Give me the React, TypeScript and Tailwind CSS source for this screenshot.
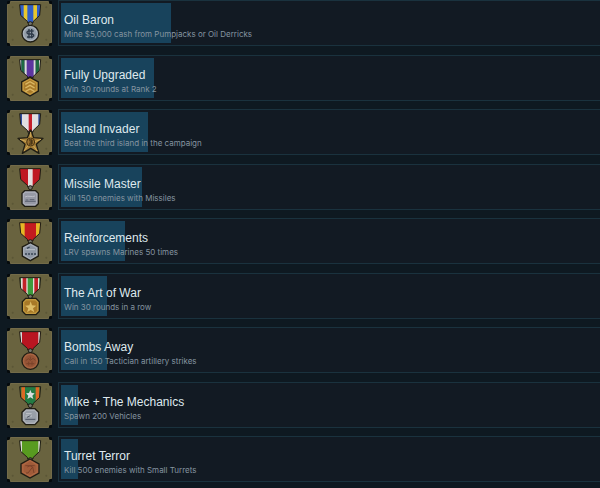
import { useId } from 'react'
import type { ReactNode } from 'react'

type Stripe = [x: number, width: number, color: string]

interface Achievement {
  title: string
  description: string
  percent: number
  base: string
  stripes: Stripe[]
  medal: ReactNode
}

const ink = '#1f1d14'

const roundSilver = (
  <g>
    <circle cx="70" cy="98" r="25" fill="#a3abb5" stroke={ink} strokeWidth="4" />
    <circle cx="70" cy="98" r="20" fill="#929ca8" stroke="#b5bdc5" strokeWidth="2" />
    <path d="M80 90h-16l-4 3v3l4 3h12l4 3v3l-4 3H60M66 84v28M74 84v28" fill="none" stroke="#2f3b4a" strokeWidth="4" />
  </g>
)

const goldChevrons = (
  <g>
    <path d="M69 64l25 14v27L69 120 44 105V78z" fill="#c0923a" stroke={ink} strokeWidth="4" />
    <path d="M69 69l20 12v21l-20 12-20-12V81z" fill="#ab7c2a" stroke="#cba448" strokeWidth="2" />
    <path d="M55 85l14-8 14 8M55 96l14-8 14 8M55 107l14-8 14 8" fill="none" stroke="#dbb865" strokeWidth="4" />
  </g>
)

const goldStar = (
  <g>
    <path
      d="M71 60l9 23 28 2-20 18 8 27-25-15-25 15 8-27-21-18 28-2z"
      fill="#a98238"
      stroke={ink}
      strokeWidth="4"
      strokeLinejoin="round"
    />
    <path d="M71 66v20M102 88l-19 7M91 123l-12-16M51 123l12-16M39 88l20 7" stroke="#cfab5c" strokeWidth="3" />
    <circle cx="71" cy="96" r="12" fill="#9b7230" stroke="#4a3515" strokeWidth="3" />
    <path d="M66 90h9v12h-9M68 96h7" fill="none" stroke="#2f220e" strokeWidth="3" />
  </g>
)

const silverSquare = (
  <g>
    <path d="M53 77h33l8 8v31l-8 8H53l-8-8V85z" fill="#a6a8b2" stroke={ink} strokeWidth="4" />
    <path d="M55 82h29l5 5v27l-5 5H55l-5-5V87z" fill="#9699a5" stroke="#b5b8c2" strokeWidth="2" />
    <path d="M54 96c8-6 22 2 30-3" fill="none" stroke="#bbbdc6" strokeWidth="3" />
    <path d="M54 109h32M56 105h8M68 104h14" stroke="#5d6270" strokeWidth="3" />
  </g>
)

const silverHex = (
  <g>
    <path d="M70 71l24 13v27l-24 14-24-14V84z" fill="#a1a7b1" stroke={ink} strokeWidth="4" />
    <path d="M70 76l19 11v21l-19 12-19-12V87z" fill="#8f98a5" stroke="#b0b7c0" strokeWidth="2" />
    <path d="M56 92h28" stroke="#b9bfc7" strokeWidth="3" />
    <path d="M54 105h6M63 105h6M72 105h6M81 105h6M60 88l8-4" stroke="#384454" strokeWidth="4" />
  </g>
)

const goldSquare = (
  <g>
    <path d="M56 73h31l10 10v29l-10 10H56l-10-10V83z" fill="#bd9439" stroke={ink} strokeWidth="4" />
    <path d="M58 78h27l7 7v25l-7 7H58l-7-7V85z" fill="#a87927" stroke="#c9a448" strokeWidth="2" />
    <path d="M71 82l4 12 13 1-10 8 4 12-11-7-11 7 4-12-10-8 13-1z" fill="#dcbc66" />
  </g>
)

const bronzeRound = (
  <g>
    <circle cx="70" cy="99" r="25" fill="#a4613e" stroke={ink} strokeWidth="4" />
    <circle cx="70" cy="99" r="20" fill="#955436" stroke="#b16c48" strokeWidth="2" />
    <path d="M56 98l8-6 6 5 8-6 7 6M58 107h24M65 101v11M75 100v12M70 86v9" fill="none" stroke="#7a432a" strokeWidth="3" />
  </g>
)

const silverRound = (
  <g>
    <path d="M56 77h28l11 11v25l-11 12H56l-11-12V88z" fill="#a9acb4" stroke={ink} strokeWidth="4" />
    <path d="M58 82h24l8 8v21l-8 9H58l-8-9V90z" fill="#999fa8" stroke="#b9bdc4" strokeWidth="2" />
    <path d="M55 99h20M57 92h17" stroke="#c0c4ca" strokeWidth="3" />
    <path d="M55 109h30M60 103l10-5" stroke="#4d5563" strokeWidth="3" />
  </g>
)

const bronzeHex = (
  <g>
    <path d="M69 66l27 15v27l-27 15-27-15V81z" fill="#a9613d" stroke={ink} strokeWidth="4" />
    <path d="M69 71l21 13v21l-21 12-21-12V84z" fill="#a05b39" stroke="#b56f4a" strokeWidth="2" />
    <path d="M55 86h28M61 90l8-4 8 4-14 18M77 90l4 18M63 108h-6" fill="none" stroke="#7b432a" strokeWidth="3" />
  </g>
)

const achievements: Achievement[] = [
  {
    title: 'Oil Baron',
    description: 'Mine $5,000 cash from Pumpjacks or Oil Derricks',
    percent: 19,
    base: '#315fc7',
    stripes: [[50, 11, '#e8c82c'], [79, 11, '#e8c82c']],
    medal: roundSilver,
  },
  {
    title: 'Fully Upgraded',
    description: 'Win 30 rounds at Rank 2',
    percent: 16,
    base: '#5d36a0',
    stripes: [[36, 7, '#d8dcd8'], [43, 10, '#1e6b42'], [53, 6, '#d8dcd8'], [80, 6, '#d8dcd8'], [86, 10, '#1e6b42'], [96, 7, '#d8dcd8']],
    medal: goldChevrons,
  },
  {
    title: 'Island Invader',
    description: 'Beat the third island in the campaign',
    percent: 15,
    base: '#e1dfe1',
    stripes: [[36, 9, '#314ea0'], [65, 10, '#c51f2b'], [94, 9, '#314ea0']],
    medal: goldStar,
  },
  {
    title: 'Missile Master',
    description: 'Kill 150 enemies with Missiles',
    percent: 14,
    base: '#bf1822',
    stripes: [[63, 14, '#e4dedf']],
    medal: silverSquare,
  },
  {
    title: 'Reinforcements',
    description: 'LRV spawns Marines 50 times',
    percent: 11,
    base: '#c31a1f',
    stripes: [[36, 17, '#e4b626'], [87, 17, '#e4b626']],
    medal: silverHex,
  },
  {
    title: 'The Art of War',
    description: 'Win 30 rounds in a row',
    percent: 8,
    base: '#e0dedb',
    stripes: [[36, 6, '#2f8b35'], [47, 11, '#c12228'], [62, 16, '#3c9b3c'], [82, 11, '#c12228'], [97, 6, '#2f8b35']],
    medal: goldSquare,
  },
  {
    title: 'Bombs Away',
    description: 'Call in 150 Tactician artillery strikes',
    percent: 8,
    base: '#b91521',
    stripes: [[36, 9, '#dadada'], [94, 9, '#dadada']],
    medal: bronzeRound,
  },
  {
    title: 'Mike + The Mechanics',
    description: 'Spawn 200 Vehicles',
    percent: 3,
    base: '#237b43',
    stripes: [[43, 11, '#db6a25'], [86, 11, '#db6a25']],
    medal: (
      <g>
        <path d="M70 21l4 9 9 1-7 7 3 10-9-5-9 5 3-10-7-7 9-1z" fill="#d9dfe0" />
        {silverRound}
      </g>
    ),
  },
  {
    title: 'Turret Terror',
    description: 'Kill 500 enemies with Small Turrets',
    percent: 3,
    base: '#589b20',
    stripes: [[36, 9, '#dadcd4'], [94, 9, '#dadcd4']],
    medal: bronzeHex,
  },
]

const ribbon = 'M38 11h63l-3 32-20 19v4H62v-4L41 43z'

function MedalIcon({ base, stripes, medal }: Pick<Achievement, 'base' | 'stripes' | 'medal'>) {
  const clipId = useId()

  return (
    <svg viewBox="0 0 135 135" className="mt-px size-[45px] shrink-0" aria-hidden="true">
      <rect width="135" height="135" rx="4" fill="#050a0c" />
      <path d="M10 0h115l2 8 8 2v115l-8 2-2 8H10l-2-8-8-2V10l8-2z" fill="#736b49" />
      <path d="M12 3h111l3 7 6 2v111l-6 2-3 7H12l-3-7-6-2V12l6-2z" fill="#69633f" />
      {/* Corner rivets */}
      <g fill="#5b5637">
        <circle cx="17" cy="19" r="3" />
        <circle cx="118" cy="19" r="3" />
        <circle cx="17" cy="116" r="3" />
        <circle cx="118" cy="116" r="3" />
      </g>
      <clipPath id={clipId}>
        <path d={ribbon} />
      </clipPath>
      <g clipPath={`url(#${clipId})`}>
        <rect x="36" y="9" width="68" height="58" fill={base} />
        {stripes.map(([x, width, color]) => (
          <rect key={x} x={x} y="9" width={width} height="58" fill={color} />
        ))}
      </g>
      <path d={ribbon} fill="none" stroke={ink} strokeWidth="3" />
      <circle cx="70" cy="68" r="6" fill="#77776c" stroke={ink} strokeWidth="3" />
      {medal}
    </svg>
  )
}

export default function App() {
  return (
    <main className="min-h-screen overflow-hidden bg-[#0e1921] pl-[7px] font-['Liberation_Sans',Arial,sans-serif]">
      <ul>
        {achievements.map((item) => (
          <li key={item.title} className="flex gap-[6px] odd:mb-[9px] even:mb-2">
            <MedalIcon base={item.base} stripes={item.stripes} medal={item.medal} />
            <div className="min-w-0 flex-1">
              {/* The track runs past the right edge of the window */}
              <div className="grid h-[46px] w-[108%] border border-[#1a323e] bg-[#121a23] p-[2px]">
                <div
                  role="progressbar"
                  aria-label={item.title}
                  aria-valuenow={item.percent}
                  className="col-start-1 row-start-1 bg-[#18435c]"
                  style={{ width: `${item.percent}%` }}
                />
                <div className="col-start-1 row-start-1 pt-[10px] pl-[3px]">
                  <h3 className="text-[12px] leading-[15px] text-[#dfe9ee]">{item.title}</h3>
                  <p className="font-['Inter',sans-serif] text-[8px] leading-[12px] text-[#8594a0]">{item.description}</p>
                </div>
              </div>
            </div>
          </li>
        ))}
      </ul>
    </main>
  )
}
